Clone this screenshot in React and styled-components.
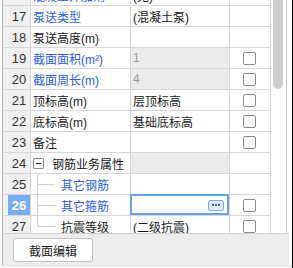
import React from "react";
import styled, { createGlobalStyle, css } from "styled-components";

const GlobalStyle = createGlobalStyle`
  html, body { margin: 0; padding: 0; background: #ffffff; }
  body {
    font-family: "Liberation Sans", "Noto Sans CJK SC", sans-serif;
    font-size: 12px;
    color: #1a1a1a;
  }
`;

const Frame = styled.div`
  width: 293px;
  height: 268px;
  box-sizing: border-box;
  border-right: 1px solid #000;
  display: flex;
  flex-direction: column;
  overflow: hidden;
  background: #fff;
`;

const GridArea = styled.div`
  height: 233px;
  display: flex;
  margin-left: 2px;
  border-left: 1px solid #b4b4b4;
`;

const Table = styled.div`
  width: 268px;
  overflow: hidden;
  display: flex;
  flex-direction: column;
`;

const Rows = styled.div`
  margin-top: -15px;
  display: flex;
  flex-direction: column;
`;

const Row = styled.div`
  display: grid;
  grid-template-columns: 28px 100px 99px 41px;
  height: 21px;
  flex: none;
`;

const Cell = styled.div`
  box-sizing: border-box;
  border-right: 1px solid #d6d6d6;
  border-bottom: 1px solid #d6d6d6;
  display: flex;
  align-items: center;
  position: relative;
  white-space: nowrap;
  overflow: visible;
  background: ${(p) => (p.$disabled ? "#ebebeb" : "#fff")};
`;

const NumCell = styled(Cell)`
  background: #f0f0f0;
  padding-left: 5px;
  align-items: stretch;
`;

const NumBox = styled.div`
  flex: 1;
  display: flex;
  align-items: center;
  justify-content: center;
  font-size: 13px;
  color: #333;
  ${(p) =>
    p.$selected &&
    css`
      background: #74aef0;
      color: #fff;
      font-weight: bold;
    `}
`;

const NameCell = styled(Cell)`
  padding-left: 2px;
  overflow: hidden;
`;

const NameText = styled.span`
  color: ${(p) => (p.$blue ? "#2a62dc" : "#1a1a1a")};
`;

const ValueCell = styled(Cell)`
  padding-left: 2px;
`;

const ValueText = styled.span`
  color: ${(p) => (p.$muted ? "#9a9a9a" : "#1a1a1a")};
`;

const CheckCell = styled(Cell)`
  justify-content: center;
`;

const CheckBox = styled.span`
  width: 13px;
  height: 13px;
  box-sizing: border-box;
  border: 1px solid #8c8c8c;
  border-radius: 2px;
  background: #fff;
  margin-left: -1px;
`;

const ToggleBox = styled.span`
  width: 11px;
  height: 11px;
  box-sizing: border-box;
  border: 1px solid #8a8a8a;
  border-radius: 1px;
  display: flex;
  align-items: center;
  justify-content: center;
  margin-right: 8px;
  background: #fff;
  &::after {
    content: "";
    width: 5px;
    height: 1px;
    background: #333;
  }
`;

const TreeGuide = styled.span`
  width: 30px;
  align-self: stretch;
  margin-left: -2px;
  position: relative;
  flex: none;
  &::before {
    content: "";
    position: absolute;
    left: 6px;
    top: -1px;
    width: 1px;
    height: ${(p) => (p.$last ? "11px" : "22px")};
    background: #cfcfcf;
  }
  &::after {
    content: "";
    position: absolute;
    left: 7px;
    top: 10px;
    width: 17px;
    height: 1px;
    background: #cfcfcf;
  }
`;

const EditBox = styled.div`
  position: absolute;
  top: -1px;
  left: -1px;
  right: 0;
  bottom: 0;
  border: 2px solid #66a3e6;
  box-sizing: border-box;
  background: #fff;
  display: flex;
  align-items: center;
  justify-content: flex-end;
  padding-right: 3px;
`;

const EllipsisButton = styled.span`
  width: 16px;
  height: 11px;
  box-sizing: border-box;
  border: 1px solid #7fabdf;
  border-radius: 2px;
  background: #dfeaf8;
  display: flex;
  align-items: center;
  justify-content: center;
  gap: 1px;
  margin-top: 1px;
`;

const Dot = styled.span`
  width: 2px;
  height: 2px;
  background: #3f6fae;
`;

const Scrollbar = styled.div`
  width: 16px;
  box-sizing: border-box;
  border-right: 1px solid #c8c8c8;
  padding: 0 3px 0 2px;
  display: flex;
  flex-direction: column;
`;

const Thumb = styled.div`
  height: 89px;
  background: #cdcdcd;
  border-radius: 0 0 5px 5px;
`;

const ButtonBar = styled.div`
  height: 32px;
  box-sizing: border-box;
  width: 287px;
  margin-left: 2px;
  border-top: 1px solid #d0d0d0;
  border-left: 1px solid #b4b4b4;
  background: #ececec;
  display: flex;
  align-items: flex-start;
  padding: 4px 0 0 10px;
`;

const Button = styled.button`
  width: 80px;
  height: 24px;
  box-sizing: border-box;
  border: 1px solid #c4c4c4;
  border-radius: 3px;
  background: #fff;
  font-family: "Liberation Sans", "Noto Sans CJK SC", sans-serif;
  font-size: 12px;
  color: #1a1a1a;
  padding: 0;
  cursor: pointer;
`;

const BottomStrip = styled.div`
  flex: 1;
  background: #f6f6f6;
  border-top: 1px solid #e2e2e2;
`;

const rows = [
  { n: 16, name: "混凝土外加剂", blue: true, value: "(无)" },
  { n: 17, name: "泵送类型", blue: true, value: "(混凝土泵)" },
  { n: 18, name: "泵送高度(m)" },
  { n: 19, name: "截面面积(m²)", blue: true, value: "1", disabled: true, check: true },
  { n: 20, name: "截面周长(m)", blue: true, value: "4", disabled: true, check: true },
  { n: 21, name: "顶标高(m)", value: "层顶标高", check: true },
  { n: 22, name: "底标高(m)", value: "基础底标高", check: true },
  { n: 23, name: "备注", check: true },
  { n: 24, name: "钢筋业务属性", group: true, disabled: true },
  { n: 25, name: "其它钢筋", blue: true, child: true },
  { n: 26, name: "其它箍筋", blue: true, child: true, editing: true, selected: true, check: true },
  { n: 27, name: "抗震等级", child: true, last: true, value: "(二级抗震)", check: true },
];

export default function App() {
  return (
    <>
      <GlobalStyle />
      <Frame>
        <GridArea>
          <Table>
            <Rows>
              {rows.map((r) => (
                <Row key={r.n}>
                  <NumCell>
                    <NumBox $selected={r.selected}>{r.n}</NumBox>
                  </NumCell>
                  <NameCell>
                    {r.group && <ToggleBox />}
                    {r.child && <TreeGuide $last={r.last} />}
                    <NameText $blue={r.blue}>{r.name}</NameText>
                  </NameCell>
                  <ValueCell $disabled={r.disabled}>
                    {r.value && <ValueText $muted={r.disabled}>{r.value}</ValueText>}
                    {r.editing && (
                      <EditBox>
                        <EllipsisButton>
                          <Dot />
                          <Dot />
                          <Dot />
                        </EllipsisButton>
                      </EditBox>
                    )}
                  </ValueCell>
                  <CheckCell>{r.check && <CheckBox />}</CheckCell>
                </Row>
              ))}
            </Rows>
          </Table>
          <Scrollbar>
            <Thumb />
          </Scrollbar>
        </GridArea>
        <ButtonBar>
          <Button>截面编辑</Button>
        </ButtonBar>
        <BottomStrip />
      </Frame>
    </>
  );
}
